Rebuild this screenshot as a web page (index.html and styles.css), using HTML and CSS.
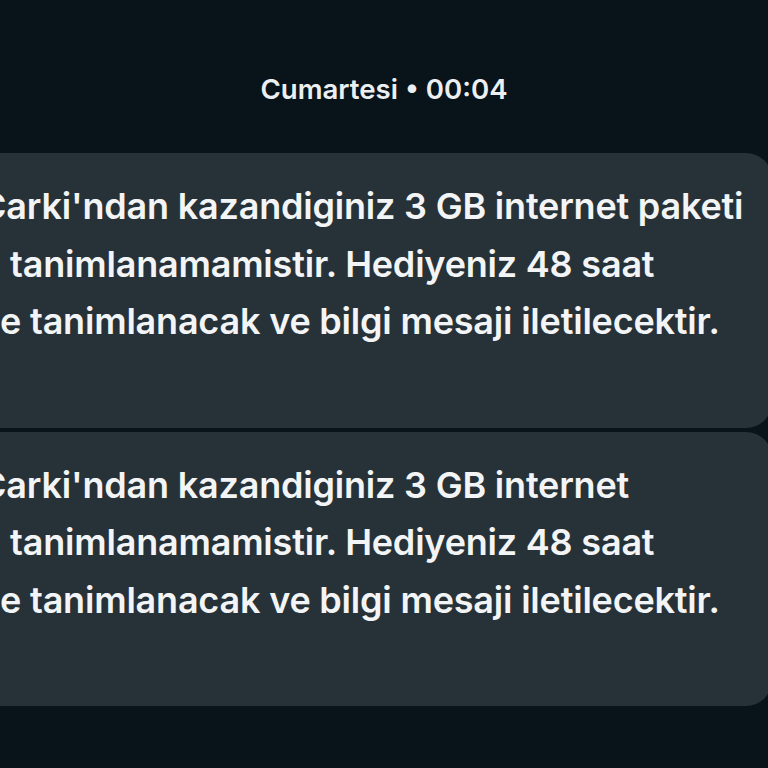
FILE: index.html
```html
<!DOCTYPE html>
<html lang="tr">
<head>
<meta charset="utf-8">
<title>Mesajlar</title>
<link rel="stylesheet" href="styles.css">
</head>
<body>
<div class="screen">
  <div class="date">Cumartesi • 00:04</div>
  <div class="bubble">
    <span class="line shift-a">Carki'ndan kazandiginiz 3 GB internet paketi</span>
    <span class="line shift-b">z tanimlanamamistir. Hediyeniz 48 saat</span>
    <span class="line">e tanimlanacak ve bilgi mesaji iletilecektir.</span>
  </div>
  <div class="bubble">
    <span class="line shift-a">Carki'ndan kazandiginiz 3 GB internet</span>
    <span class="line shift-b">z tanimlanamamistir. Hediyeniz 48 saat</span>
    <span class="line">e tanimlanacak ve bilgi mesaji iletilecektir.</span>
  </div>
</div>
</body>
</html>
```
FILE: styles.css
```css
html, body {
  margin: 0;
  padding: 0;
  background: #08131a;
}
.screen {
  width: 768px;
  height: 768px;
  overflow: hidden;
  background: #08131a;
  font-family: Inter, "Noto Sans", sans-serif;
  color: #f3f4f5;
}
.date {
  text-align: center;
  font-size: 27.6px;
  font-weight: 600;
  line-height: 30px;
  padding-top: 74px;
  margin-bottom: 49px;
  color: #eceff1;
}
.bubble {
  margin-left: -40px;
  margin-right: -4px;
  margin-bottom: 4px;
  background: #263238;
  border-radius: 26px;
  padding: 25px 0 77px 40px;
  font-size: 36px;
  font-weight: 600;
  line-height: 57.5px;
  letter-spacing: -0.2px;
}
.line {
  display: block;
  white-space: nowrap;
}
.shift-a {
  margin-left: -20px;
}
.shift-b {
  margin-left: -19px;
}
```
